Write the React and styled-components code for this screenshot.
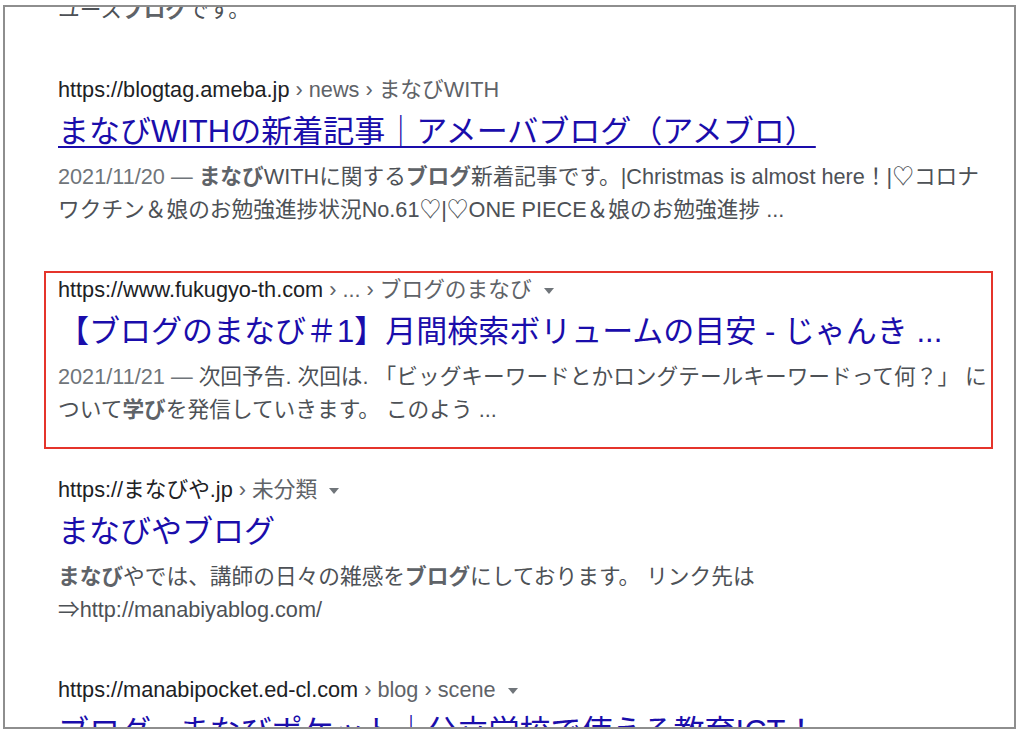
import React from 'react';
import styled, { createGlobalStyle } from 'styled-components';

const Global = createGlobalStyle`
    body {
        margin: 0;
        background: #fff;
        font-family: "Liberation Sans", "Noto Sans CJK JP", sans-serif;
    }
`;

const Frame = styled.div`
    margin: 5px 0 0 3px;
    width: 1013px;
    height: 724px;
    box-sizing: border-box;
    border: 2px solid #8e8e8e;
    overflow: hidden;
    background: #fff;
`;

const List = styled.div`
    margin-top: -14px;
    padding: 0 35px 0 53px;
`;

const Result = styled.div`
    margin-top: ${p => (p.$highlight ? '44.5px' : '48.5px')};
    ${p => p.$highlight && `
        border: 2px solid #e5342b;
        padding: 2px 12px 20.5px 12px;
        margin-left: -14px;
        margin-right: -14px;
        margin-bottom: -22.5px;
    `}
`;

const UrlLine = styled.div`
    display: flex;
    align-items: center;
    height: 30px;
    font-size: 21.7px;
    line-height: 30px;
    white-space: nowrap;
`;

const Domain = styled.span`
    color: #202124;
`;

const Crumbs = styled.span`
    color: #5f6368;
`;

const Caret = styled.span`
    display: inline-block;
    margin-left: 12px;
    margin-top: 2px;
    width: 0;
    height: 0;
    border-left: 5px solid transparent;
    border-right: 5px solid transparent;
    border-top: 6px solid #70757a;
`;

const Title = styled.div`
    margin-top: 7.5px;
    font-size: 31px;
    line-height: 39px;
    color: #1a0dab;
    white-space: nowrap;
    text-decoration: ${p => (p.$hover ? 'underline' : 'none')};
    text-decoration-thickness: 2px;
    text-underline-offset: 4px;
`;

const Snippet = styled.div`
    margin-top: ${p => (p.$flush ? '0' : '9px')};
    font-size: 21.7px;
    line-height: 33px;
    color: #4d5156;
    white-space: nowrap;
`;

const Line = styled.div``;

const Date = styled.span`
    color: #70757a;
`;

const Em = styled.b`
    font-weight: 700;
    color: #5f6368;
`;

export default function App() {
    return (
        <>
            <Global />
            <Frame>
                <List>
                    <Snippet $flush>
                        <Line>ユース<Em>ブログ</Em>です。</Line>
                    </Snippet>

                    <Result>
                        <UrlLine>
                            <Domain>https://blogtag.ameba.jp</Domain>
                            <Crumbs>&nbsp;› news › まなびWITH</Crumbs>
                        </UrlLine>
                        <Title $hover>まなびWITHの新着記事｜アメーバブログ（アメブロ）</Title>
                        <Snippet>
                            <Line><Date>2021/11/20 — </Date><Em>まなび</Em>WITHに関する<Em>ブログ</Em>新着記事です。|Christmas is almost here！|♡コロナ</Line>
                            <Line>ワクチン＆娘のお勉強進捗状況No.61♡|♡ONE PIECE＆娘のお勉強進捗 ...</Line>
                        </Snippet>
                    </Result>

                    <Result $highlight>
                        <UrlLine>
                            <Domain>https://www.fukugyo-th.com</Domain>
                            <Crumbs>&nbsp;› ... › ブログのまなび</Crumbs>
                            <Caret />
                        </UrlLine>
                        <Title>【ブログのまなび＃1】月間検索ボリュームの目安 - じゃんき ...</Title>
                        <Snippet>
                            <Line><Date>2021/11/21 — </Date>次回予告. 次回は. 「ビッグキーワードとかロングテールキーワードって何？」 に</Line>
                            <Line>ついて<Em>学び</Em>を発信していきます。 このよう ...</Line>
                        </Snippet>
                    </Result>

                    <Result>
                        <UrlLine>
                            <Domain>https://まなびや.jp</Domain>
                            <Crumbs>&nbsp;› 未分類</Crumbs>
                            <Caret />
                        </UrlLine>
                        <Title>まなびやブログ</Title>
                        <Snippet>
                            <Line><Em>まなび</Em>やでは、講師の日々の雑感を<Em>ブログ</Em>にしております。 リンク先は</Line>
                            <Line>⇒http://manabiyablog.com/</Line>
                        </Snippet>
                    </Result>

                    <Result>
                        <UrlLine>
                            <Domain>https://manabipocket.ed-cl.com</Domain>
                            <Crumbs>&nbsp;› blog › scene</Crumbs>
                            <Caret />
                        </UrlLine>
                        <Title>ブログ - まなびポケット｜公立学校で使える教育ICT！</Title>
                    </Result>
                </List>
            </Frame>
        </>
    );
}
